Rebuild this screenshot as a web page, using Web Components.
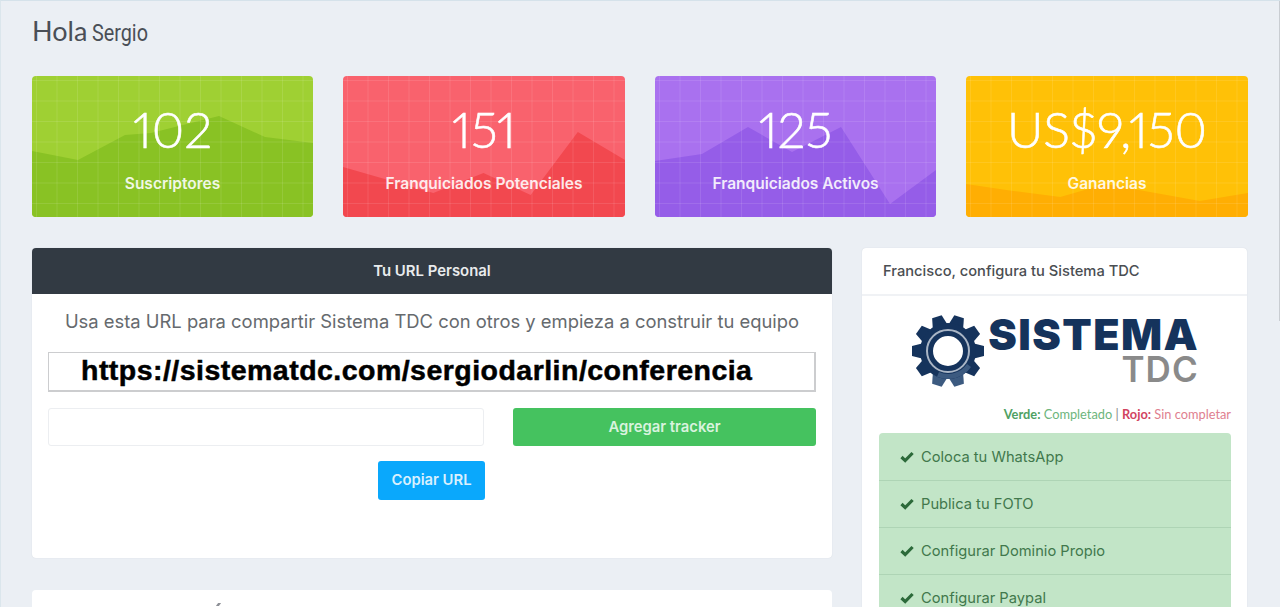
<!DOCTYPE html>
<html lang="es">
<head>
<meta charset="utf-8">
<title>Sistema TDC</title>
<style>
    html, body { margin: 0; height: 100%; overflow: hidden; }
    body { background: #ebeff4; font-family: Inter, "Liberation Sans", sans-serif; }
    app-shell { height: 607px; }
</style>
</head>
<body>
<app-shell>
    <page-title slot="title" name="Sergio">Hola</page-title>
    <stat-card value="102" label="Suscriptores" color="green"
        points="0,75 46,84 93,59 119,57 187,40 233,61 281,67"></stat-card>
    <stat-card value="151" label="Franquiciados Potenciales" color="red"
        points="0,91 90,117 140,97 187,119 234,56 281,84"></stat-card>
    <stat-card value="125" label="Franquiciados Activos" color="purple"
        points="0,85 47,78 93,51 137,76 186,51 235,128 281,94"></stat-card>
    <stat-card value="US$9,150" label="Ganancias" color="amber"
        points="0,108 47,115 94,121 139,108 233,125 281,117"></stat-card>

    <url-panel slot="left"></url-panel>
    <blank-panel slot="left"></blank-panel>

    <setup-panel slot="right" heading="Francisco, configura tu Sistema TDC">
        <check-row>Coloca tu WhatsApp</check-row>
        <check-row>Publica tu FOTO</check-row>
        <check-row>Configurar Dominio Propio</check-row>
        <check-row>Configurar Paypal</check-row>
    </setup-panel>
</app-shell>

<script>
class AppShell extends HTMLElement {
    constructor () {
        super()
        this.attachShadow({ mode: 'open' })
        this.shadowRoot.innerHTML = /*html*/ `
        <style>
            :host {
                display: block;
                position: relative;
                box-sizing: border-box;
                padding: 0 32px 0 31px;
                overflow: hidden;
                border-top: 1px solid #d5e2ea;
                border-left: 1px solid #dbe6ec;
            }
            /* thin scrollbar edge on the right */
            :host::after {
                content: "";
                position: absolute;
                top: 0;
                right: 0;
                width: 1px;
                height: 320px;
                background: #c9cdd2;
            }
            .title { height: 75px; }
            .stats {
                display: grid;
                grid-template-columns: 281px 282px 281px 282px;
                gap: 30px;
            }
            .main {
                display: flex;
                gap: 30px;
                margin-top: 31px;
                align-items: flex-start;
            }
            .left { width: 800px; flex: none; display: flex; flex-direction: column; gap: 32px; }
            .right { width: 385px; flex: none; }
        </style>
        <div class="title"><slot name="title"></slot></div>
        <div class="stats"><slot></slot></div>
        <div class="main">
            <div class="left"><slot name="left"></slot></div>
            <div class="right"><slot name="right"></slot></div>
        </div>`
    }
}

class PageTitle extends HTMLElement {
    constructor () {
        super()
        this.attachShadow({ mode: 'open' })
        this.shadowRoot.innerHTML = /*html*/ `
        <style>
            :host {
                display: block;
                padding-top: 13px;
                color: #4a4f57;
                font: 400 27px/34px Lato, "Liberation Sans", sans-serif;
            }
            span {
                font: 400 23px/34px Roboto, "Liberation Sans", sans-serif;
                transform: scaleX(.86);
                transform-origin: 0 50%;
                display: inline-block;
                margin-left: -2px;
            }
        </style>
        <slot></slot> <span>${this.getAttribute('name')}</span>`
    }
}

const CARD_COLORS = {
    green: ['#9fd033', '#89c224'],
    red: ['#f9626d', '#f2484f'],
    purple: ['#a971ef', '#955de8'],
    amber: ['#ffc107', '#ffae03']
}

class StatCard extends HTMLElement {
    constructor () {
        super()
        const [top, low] = CARD_COLORS[this.getAttribute('color')]
        const points = this.getAttribute('points')
        this.attachShadow({ mode: 'open' })
        this.shadowRoot.innerHTML = /*html*/ `
        <style>
            :host {
                display: block;
                position: relative;
                height: 141px;
                overflow: hidden;
                border-radius: 4px;
                background: ${top};
                color: #fff;
                text-align: center;
            }
            svg { position: absolute; inset: 0; width: 100%; height: 100%; }
            .grid {
                position: absolute;
                inset: 0;
                background-image:
                    linear-gradient(rgba(255,255,255,.1) 1px, transparent 1px),
                    linear-gradient(90deg, rgba(255,255,255,.1) 1px, transparent 1px);
                background-size: 20.5px 20.5px;
                background-position: 4px 4px;
            }
            .body { position: relative; padding-top: 21px; }
            .value {
                font: 300 50px/64px Lato, "Liberation Sans", sans-serif;
                font-variant-numeric: proportional-nums;
                -webkit-text-stroke: .6px #fff;
            }
            .label { font: 600 15.5px/20px Inter, "Liberation Sans", sans-serif; margin-top: 13px; opacity: .88; }
        </style>
        <svg viewBox="0 0 281 141" preserveAspectRatio="none">
            <polygon fill="${low}" points="${points} 281,141 0,141"/>
        </svg>
        <div class="grid"></div>
        <div class="body">
            <div class="value">${this.getAttribute('value')}</div>
            <div class="label">${this.getAttribute('label')}</div>
        </div>`
    }
}

class UrlPanel extends HTMLElement {
    constructor () {
        super()
        this.attachShadow({ mode: 'open' })
        this.shadowRoot.innerHTML = /*html*/ `
        <style>
            :host {
                display: block;
                height: 310px;
                background: #fff;
                border-radius: 4px;
                overflow: hidden;
                box-shadow: 0 0 1px rgba(120,130,150,.3);
            }
            header {
                height: 46px;
                background: #323a43;
                color: #e9ebed;
                font: 600 14.9px/46px Inter, "Liberation Sans", sans-serif;
                text-align: center;
            }
            .body { padding: 0 16px; }
            p {
                margin: 15px 0 0;
                color: #666a6e;
                font: 400 18.4px/24px Inter, "Liberation Sans", sans-serif;
                text-align: center;
            }
            .url {
                box-sizing: border-box;
                height: 40px;
                margin-top: 19px;
                padding-left: 32px;
                border: 1px solid #cccdcf;
                border-width: 1px 2px 2px 1px;
                color: #000;
                font: 700 28.5px/34px "Liberation Sans", sans-serif;
                letter-spacing: .47px;
                -webkit-text-stroke: .5px #000;
                white-space: nowrap;
                overflow: hidden;
            }
            .row { display: flex; gap: 29px; margin-top: 16px; }
            .field {
                box-sizing: border-box;
                width: 436px;
                height: 38px;
                border: 1px solid #eceef1;
                border-radius: 3px;
            }
            .btn {
                display: flex;
                align-items: center;
                justify-content: center;
                border-radius: 3px;
                color: #fff;
                font: 600 14.8px/1 Inter, "Liberation Sans", sans-serif;
            }
            .track { flex: 1; background: #45c25f; color: #d9f3de; }
            .copy { width: 107px; height: 39px; margin: 15px 0 0 330px; background: #0aa8fc; color: #d8f0fe; }
        </style>
        <header>Tu URL Personal</header>
        <div class="body">
            <p>Usa esta URL para compartir Sistema TDC con otros y empieza a construir tu equipo</p>
            <div class="url">https://sistematdc.com/sergiodarlin/conferencia</div>
            <div class="row">
                <div class="field"></div>
                <div class="btn track">Agregar tracker</div>
            </div>
            <div class="btn copy">Copiar URL</div>
        </div>`
    }
}

class BlankPanel extends HTMLElement {
    constructor () {
        super()
        this.attachShadow({ mode: 'open' })
        this.shadowRoot.innerHTML = /*html*/ `
        <style>
            :host { display: block; height: 100px; background: #fff; border-radius: 4px; padding-top: 13px; box-sizing: border-box; }
            /* tip of the accent of the heading that is cut off below */
            i { display: block; width: 3px; height: 3px; margin-left: 185px; background: #8d9096; transform: skewX(-35deg); }
        </style>
        <i></i>`
    }
}

const GEAR_TEETH = Array.from({ length: 10 }, (_, i) => 18 + i * 36)

class SetupPanel extends HTMLElement {
    constructor () {
        super()
        this.attachShadow({ mode: 'open' })
        this.shadowRoot.innerHTML = /*html*/ `
        <style>
            :host {
                display: block;
                background: #fff;
                border-radius: 4px;
                box-shadow: 0 0 1px rgba(120,130,150,.3);
            }
            header {
                height: 46px;
                padding-left: 21px;
                border-bottom: 2px solid #f0f2f5;
                color: #4a4e52;
                font: 500 14.7px/46px Inter, "Liberation Sans", sans-serif;
            }
            .logo {
                display: flex;
                justify-content: center;
                gap: 3px;
                height: 91px;
                padding-top: 18px;
            }
            .logo svg { width: 74px; height: 74px; flex: none; }
            .words { display: flex; flex-direction: column; align-items: flex-end; }
            .sis {
                color: #15335c;
                font: 900 43px/40px Inter, "Liberation Sans", sans-serif;
                letter-spacing: 1.4px;
                margin-right: -1.4px;
            }
            .tdc {
                color: #8a8a8a;
                font: 600 35px/28px Inter, "Liberation Sans", sans-serif;
                letter-spacing: 1px;
                margin-right: -1px;
                margin-top: 1px;
            }
            .legend {
                margin: 0 16px 10px 0;
                font: 400 12.8px/18px Lato, "Liberation Sans", sans-serif;
                text-align: right;
            }
            .ok { color: #6db57c; }
            .ok b { color: #4fa163; }
            .no { color: #e0808f; }
            .no b { color: #d2445f; }
            .sep { color: #888; }
            .list {
                margin: 0 16px 0 17px;
                padding-top: 1px;
                border-radius: 4px 4px 0 0;
                overflow: hidden;
                background: #c2e5c7;
            }
        </style>
        <header>${this.getAttribute('heading')}</header>
        <div class="logo">
            <svg viewBox="-37 -37 74 74" aria-hidden="true">
                ${GEAR_TEETH.map(a => `<path d="M-7.5 -26 L-5 -36 L5 -36 L7.5 -26 Z" fill="${a > 130 && a < 230 ? '#3c5a80' : '#15335c'}" transform="rotate(${a})"/>`).join('')}
                <circle r="21.5" fill="none" stroke="#15335c" stroke-width="13"/>
                <path d="M 23 16 A 28 28 0 0 1 -11 25.7 L -9 21 A 23 23 0 0 0 19 13 Z" fill="#3c5a80"/>
                <circle r="21" fill="none" stroke="#a9b5c5" stroke-width="2"/>
            </svg>
            <div class="words">
                <div class="sis">SISTEMA</div>
                <div class="tdc">TDC</div>
            </div>
        </div>
        <div class="legend"><span class="ok"><b>Verde:</b> Completado</span> <span class="sep">|</span> <span class="no"><b>Rojo:</b> Sin completar</span></div>
        <div class="list"><slot></slot></div>`
    }
}

class CheckRow extends HTMLElement {
    constructor () {
        super()
        this.attachShadow({ mode: 'open' })
        this.shadowRoot.innerHTML = /*html*/ `
        <style>
            :host {
                display: flex;
                align-items: center;
                gap: 7px;
                box-sizing: border-box;
                height: 47px;
                padding-left: 21px;
                border-bottom: 1px solid #aed4b5;
                color: #41784c;
                font: 400 14.7px/1 Inter, "Liberation Sans", sans-serif;
            }
            svg { width: 14px; height: 12px; flex: none; }
        </style>
        <svg viewBox="0 0 14 12" aria-hidden="true"><path d="M1.5 6 5.2 9.6 12.6 2" fill="none" stroke="#2c6a3a" stroke-width="3.2"/></svg>
        <slot></slot>`
    }
}

customElements.define('app-shell', AppShell)
customElements.define('page-title', PageTitle)
customElements.define('stat-card', StatCard)
customElements.define('url-panel', UrlPanel)
customElements.define('blank-panel', BlankPanel)
customElements.define('setup-panel', SetupPanel)
customElements.define('check-row', CheckRow)
</script>
</body>
</html>
